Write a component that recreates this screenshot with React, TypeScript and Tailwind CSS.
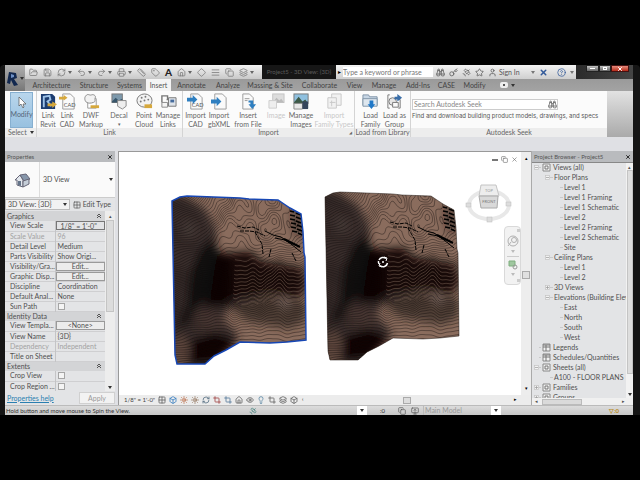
import React from 'react';
import {
  Binoculars, Key, Satellite, Star, User, CircleHelp, FolderOpen, Save, RefreshCw, Undo2, Redo2,
  Printer, Ruler, Tag, House, Diamond, AlignJustify, Copy, MonitorUp, X, Box, Sun, Crop, Eye, Lightbulb, Layers, Grid2X2,
} from 'lucide-react';

type IconType = React.ComponentType<{ size?: number; strokeWidth?: number; className?: string }>;

const Caret = ({ className = 'text-[#333]' }: { className?: string }) => (
  <svg width="4" height="3" viewBox="0 0 4 3" className={`shrink-0 ${className}`}><path d="M0 0h4L2 3z" fill="currentColor" /></svg>
);

/* ---------- title bar ---------- */

const quickTools: { icon: IconType; label: string; caret?: boolean }[] = [
  { icon: FolderOpen, label: 'Open' },
  { icon: Save, label: 'Save' },
  { icon: RefreshCw, label: 'Synchronize', caret: true },
  { icon: Undo2, label: 'Undo', caret: true },
  { icon: Redo2, label: 'Redo', caret: true },
  { icon: Printer, label: 'Measure', caret: true },
  { icon: Ruler, label: 'Aligned Dimension' },
  { icon: Tag, label: 'Tag' },
];
const viewTools: { icon: IconType; label: string; caret?: boolean }[] = [
  { icon: House, label: '3D', caret: true },
  { icon: Diamond, label: 'Section' },
  { icon: AlignJustify, label: 'Thin Lines' },
  { icon: Copy, label: 'Close Hidden' },
  { icon: Layers, label: 'Switch', caret: true },
];

function ToolButton({ icon: Icon, label, caret }: { icon: IconType; label: string; caret?: boolean }) {
  return (
    <button aria-label={label} className="flex items-center gap-[2px] text-[#777]">
      <Icon size={9} strokeWidth={2} />
      {caret && <Caret className="text-[#666]" />}
    </button>
  );
}

function TitleBar() {
  return (
    <div className="flex h-[14px] items-stretch bg-[#161616]">
      <div className="flex w-[237px] shrink-0 items-center gap-[5px] bg-linear-to-b from-[#f2f2f2] to-[#c9c9c9] pl-1">
        {quickTools.map((t) => <ToolButton key={t.label} {...t} />)}
        <button className="text-[10px] leading-none font-black text-[#222]">A</button>
        {viewTools.map((t) => <ToolButton key={t.label} {...t} />)}
      </div>
      <div className="min-w-0 flex-1 overflow-hidden text-center text-[6px] leading-[14px] whitespace-nowrap text-[#5a5a5a]">Project5 - 3D View: {'{3D}'}</div>
      <div className="flex w-[240px] shrink-0 items-center bg-linear-to-b from-[#f2f2f2] to-[#cfcfcf]">
        <span className="px-[2px] text-[6px] leading-none">▸</span>
        <input aria-label="Search help" placeholder="Type a keyword or phrase" className="h-[10px] w-[90px] bg-white text-[7px] leading-[10px] text-[#555] outline-none placeholder:text-[#777]" />
        <div className="flex items-center gap-1 pl-[3px] text-[#555]">
          <Binoculars size={9} /><Key size={9} /><Satellite size={9} /><Star size={9} /><User size={9} />
          <button className="-ml-[2px] text-[7px] leading-none whitespace-nowrap">Sign In</button>
        </div>
        <div className="ml-auto flex items-center gap-1 pr-[2px] text-[#335a9a]">
          <Caret className="text-[#777]" /><X size={9} strokeWidth={4} /><span className="w-px" /><CircleHelp size={9} /><Caret className="text-[#777]" />
        </div>
      </div>
      <div className="flex w-[57px] shrink-0 items-start justify-end bg-linear-to-r from-[#2b2b2b] to-[#454545] pr-1">
        <button aria-label="Minimize" className="flex h-[7px] w-[13px] items-center justify-center border border-[#222] bg-linear-to-b from-[#c4c4c4] to-[#666]"><span className="h-px w-[5px] bg-white" /></button>
        <button aria-label="Restore" className="flex h-[7px] w-3 items-center justify-center border border-[#222] bg-linear-to-b from-[#c4c4c4] to-[#666]"><span className="h-[3px] w-1 border border-white" /></button>
        <button aria-label="Close" className="flex h-[7px] w-[18px] items-center justify-center border border-[#411] bg-linear-to-b from-[#e58a7c] to-[#b52514] text-white"><X size={6} strokeWidth={4} /></button>
      </div>
    </div>
  );
}

const tabs: [string, string][] = [
  ['Architecture', 'w-[47px]'], ['Structure', 'w-[38px]'], ['Systems', 'w-[33px]'], ['Insert', 'w-[25px]'],
  ['Annotate', 'w-[41px]'], ['Analyze', 'w-[32px]'], ['Massing & Site', 'w-[52px]'], ['Collaborate', 'w-[47px]'],
  ['View', 'w-[23px]'], ['Manage', 'w-[36px]'], ['Add-Ins', 'w-[32px]'], ['CASE', 'w-[25px]'], ['Modify', 'w-[31px]'],
];

function TabStrip() {
  return (
    <div className="flex h-3 items-stretch bg-linear-to-b from-[#9a9a9a] to-[#a3a3a3] pl-[3px]">
      {tabs.map(([name, w]) => (
        <button key={name} className={`${w} shrink-0 text-center text-[7px] leading-3 whitespace-nowrap ${name === 'Insert' ? 'bg-[#f4f4f4] text-[#555]' : 'text-[#444]'}`}>{name}</button>
      ))}
      <button aria-label="Ribbon display" className="flex items-center gap-[3px] pl-[10px]">
        <span className="flex h-[6px] w-2 items-center justify-center rounded-xs bg-[#eee]"><span className="h-[2px] w-[2px] bg-[#555]" /></span>
        <Caret />
      </button>
    </div>
  );
}

/* ---------- ribbon ---------- */

const Sheet = () => <path d="M4 1h8l4 4v12H4z" fill="#fafafa" stroke="#9a9a9a" />;
const ArrowRight = () => <path d="M0 5h6V2l5 5-5 5V9H0z" fill="#2f7fc0" />;
const CadText = () => <text x="5" y="15" fontSize="6" fill="#555">CAD</text>;

const ribbonArt: Record<string, React.ReactNode> = {
  revit: <><path d="M1 1h12l3 3v13H1z" fill="#1c3c70" /><path d="M4 15V4l6-1 1 4-3 2 4 5" fill="none" stroke="#9ec3e8" strokeWidth="2" /><path d="M8 11h5v-2l5 3-5 4v-2H8z" fill="#d6a83c" /></>,
  cad: <><Sheet /><path d="M0 4h5V2l4 3-4 3V7H0z" fill="#d6a83c" /><CadText /></>,
  dwf: <><path d="M5 6h9v10H5z" fill="#fff" stroke="#999" /><path d="M3 3c2-3 4 0 6-1s5 1 4 3 1 4-2 5-5 1-7 0-3-5-1-7z" fill="#f2f2f2" stroke="#888" /><path d="M8 13h9v3H8z" fill="#d6a83c" /></>,
  decal: <><rect x="1" y="1" width="11" height="9" fill="#7d99ac" stroke="#777" /><path d="M1 9l4-4 3 3 4-2v4H1z" fill="#38566b" /><path d="M7 8h9v6l-4 3-5-3z" fill="#eee" stroke="#888" /></>,
  cloud: <><ellipse cx="9" cy="8" rx="8" ry="7" fill="#f2f2f2" stroke="#777" /><g fill="#777"><circle cx="6" cy="5" r="1" /><circle cx="10" cy="4" r="1" /><circle cx="13" cy="7" r="1" /><circle cx="5" cy="9" r="1" /><circle cx="9" cy="8" r="1" /></g><path d="M9 12h8v4H9z" fill="#d6a83c" /></>,
  links: <><path d="M2 10V3h6v4M7 7h5" fill="none" stroke="#777" strokeWidth="1.5" /><path d="M9 5h8v9H9z" fill="#dfe4ea" stroke="#777" /><path d="M11 7h4v3h-4z" fill="#466c9d" /><path d="M2 10h6v5H2z" fill="#f5f5f5" stroke="#888" /></>,
  importcad: <><Sheet /><ArrowRight /><CadText /></>,
  importxml: <><Sheet /><g transform="translate(0 2)"><ArrowRight /></g></>,
  insert: <><path d="M3 1h7l4 4v12H3z" fill="#fafafa" stroke="#9a9a9a" /><path d="M5 6h5M5 8h3" stroke="#999" /><path d="M9 8h5v4h3l-4 5-4-5h2v-2H9z" fill="#2f7fc0" /></>,
  image: <><rect x="5" y="1" width="12" height="9" fill="#ddd" stroke="#c4c4c4" /><path d="M5 10l4-5 3 3 2-2 3 4z" fill="#bbb" /><path d="M1 8h8v8H1z" fill="#eee" stroke="#ccc" /></>,
  images: <><rect x="1" y="1" width="15" height="10" fill="#8fc0df" stroke="#777" /><path d="M1 10l5-6 4 5 3-2 3 4v5H1z" fill="#3c5947" /><path d="M1 11h9v6H1z" fill="#e8e8e8" stroke="#888" /><path d="M10 9h6v8h-6z" fill="#35455c" /></>,
  family: <g fill="#f1f1f1" stroke="#c8c8c8"><path d="M6 1h10v12H6z" /><path d="M2 5h9v11H2z" /><path d="M6 8v6M4 10h6" /></g>,
  load: <><path d="M1 2h6l1 2h8v9H1z" fill="#c7d6e5" stroke="#8094a8" /><path d="M1 6h15v8H1z" fill="#dde6ee" stroke="#8094a8" /><path d="M8 8h4v4h2l-4 5-4-5h2z" fill="#1f78c8" /></>,
  group: <><path d="M4 2H2v14h2M13 7h2v9h-2" fill="none" stroke="#777" /><circle cx="7" cy="9" r="4" fill="#e6e6e6" stroke="#777" /><path d="M7 10h6v5H7z" fill="#fafafa" stroke="#777" /><path d="M9 4h3V1l5 4-5 4V7H9z" fill="#3a6ea8" /></>,
};

type Cmd = { art: string; a: string; b: string; w: string; off?: boolean };
const linkCmds: Cmd[] = [
  { art: 'revit', a: 'Link', b: 'Revit', w: 'w-[19px]' },
  { art: 'cad', a: 'Link', b: 'CAD', w: 'w-[19px]' },
  { art: 'dwf', a: 'DWF', b: 'Markup', w: 'w-[29px]' },
  { art: 'decal', a: 'Decal', b: '▾', w: 'w-[27px]' },
  { art: 'cloud', a: 'Point', b: 'Cloud', w: 'w-[23px]' },
  { art: 'links', a: 'Manage', b: 'Links', w: 'w-[25px]' },
];
const importCmds: Cmd[] = [
  { art: 'importcad', a: 'Import', b: 'CAD', w: 'w-[23px]' },
  { art: 'importxml', a: 'Import', b: 'gbXML', w: 'w-[24px]' },
  { art: 'insert', a: 'Insert', b: 'from File', w: 'w-[34px]' },
  { art: 'image', a: 'Image', b: '', w: 'w-[22px]', off: true },
  { art: 'images', a: 'Manage', b: 'Images', w: 'w-[28px]' },
  { art: 'family', a: 'Import', b: 'Family Types', w: 'w-[38px]', off: true },
];
const loadCmds: Cmd[] = [
  { art: 'load', a: 'Load', b: 'Family', w: 'w-[24px]' },
  { art: 'group', a: 'Load as', b: 'Group', w: 'w-[24px]' },
];

function Command({ art, a, b, w, off }: Cmd) {
  return (
    <button disabled={off} className={`${w} flex shrink-0 flex-col items-center pt-[2px] text-[7px] leading-[9px] whitespace-nowrap ${off ? 'text-[#c8c8c8]' : 'text-[#666]'}`}>
      <svg width="17" height="17" viewBox="0 0 18 18" className="mb-px shrink-0">{ribbonArt[art]}</svg>
      <span>{a}</span>
      <span className={b === '▾' ? 'text-[5px]' : ''}>{b}</span>
    </button>
  );
}

function Group({ title, cmds, className, corner }: { title: string; cmds: Cmd[]; className: string; corner?: boolean }) {
  return (
    <section className={`flex shrink-0 flex-col border-r border-[#d4d4d4] ${className}`}>
      <div className="flex h-[37px] justify-center">{cmds.map((c) => <Command key={c.art} {...c} />)}</div>
      <h2 className="relative h-[9px] bg-[#ededed] text-center text-[7px] leading-[9px] text-[#666]">
        {title}
        {corner && <span className="absolute right-[2px] text-[4px]">◢</span>}
      </h2>
    </section>
  );
}

function Ribbon() {
  return (
    <div className="flex h-[46px] overflow-hidden bg-[#fbfbfb]">
      <section className="w-8 shrink-0 border-r border-[#d4d4d4]">
        <div className="h-[37px] pt-px pl-[5px]">
          <button className="flex h-9 w-[23px] flex-col items-center border border-[#86afd0] bg-linear-to-b from-[#b9d6ec] to-[#98c1e0] pt-1 text-[7px] leading-[9px] text-[#567]">
            <svg width="8" height="12" viewBox="0 0 8 12" className="mb-px"><path d="M1 0v9l2-2 2 4 1-1-1-3h3z" fill="#fff" stroke="#555" strokeWidth="0.7" /></svg>
            Modify
          </button>
        </div>
        <h2 className="flex h-[9px] items-center gap-[3px] bg-[#ededed] pl-[3px] text-[7px] leading-[9px] text-[#666]">Select <Caret /></h2>
      </section>
      <Group title="Link" cmds={linkCmds} className="w-[146px]" />
      <Group title="Import" cmds={importCmds} className="w-[172px]" corner />
      <Group title="Load from Library" cmds={loadCmds} className="w-[56px]" />
      <section className="flex min-w-0 flex-1 flex-col overflow-hidden">
        <div className="h-[37px] pt-2 pl-[1px]">
          <div className="flex h-[11px] w-[146px] items-center justify-between border border-[#ccc] bg-white">
            <input aria-label="Search Autodesk Seek" placeholder="Search Autodesk Seek" className="h-[9px] w-[120px] pl-px text-[7px] leading-[9px] outline-none placeholder:text-[#888]" />
            <Binoculars size={9} className="text-[#555]" />
          </div>
          <p className="pt-px font-[Inter,sans-serif] text-[6px] leading-[9px] whitespace-nowrap text-[#555]">Find and download building product models, drawings, and specs</p>
        </div>
        <h2 className="h-[9px] bg-[#ededed] text-center text-[7px] leading-[9px] text-[#666]">Autodesk Seek</h2>
      </section>
      <div className="w-[26px] shrink-0 bg-linear-to-b from-[#e2e2e2] to-[#aaaaaa]" />
    </div>
  );
}

/* ---------- properties ---------- */

type Row = { kind: 'head' | 'text' | 'button' | 'check' | 'box'; name: string; value?: string; dim?: boolean };
const rows: Row[] = [
  { kind: 'head', name: 'Graphics' },
  { kind: 'box', name: 'View Scale', value: '1/8" = 1\'-0"' },
  { kind: 'text', name: 'Scale Value', value: '96', dim: true },
  { kind: 'text', name: 'Detail Level', value: 'Medium' },
  { kind: 'text', name: 'Parts Visibility', value: 'Show Origi...' },
  { kind: 'button', name: 'Visibility/Gra...', value: 'Edit...' },
  { kind: 'button', name: 'Graphic Disp...', value: 'Edit...' },
  { kind: 'text', name: 'Discipline', value: 'Coordination' },
  { kind: 'text', name: 'Default Anal...', value: 'None' },
  { kind: 'check', name: 'Sun Path' },
  { kind: 'head', name: 'Identity Data' },
  { kind: 'button', name: 'View Templa...', value: '<None>' },
  { kind: 'text', name: 'View Name', value: '{3D}' },
  { kind: 'text', name: 'Dependency', value: 'Independent', dim: true },
  { kind: 'text', name: 'Title on Sheet', value: '' },
  { kind: 'head', name: 'Extents' },
  { kind: 'check', name: 'Crop View' },
  { kind: 'check', name: 'Crop Region ...' },
];

function PropertyRow({ row }: { row: Row }) {
  if (row.kind === 'head') {
    return (
      <tr className="h-[10px] bg-[#d3d4d6]">
        <th colSpan={2} className="pl-[2px] text-left font-normal">
          <div className="flex items-center justify-between pr-1">
            <span>{row.name}</span>
            <svg width="4" height="6" viewBox="0 0 4 6" fill="none" stroke="#555"><path d="M0 3l2-2 2 2M0 5l2-2 2 2" /></svg>
          </div>
        </th>
      </tr>
    );
  }
  const id = row.name.replace(/\W/g, '');
  return (
    <tr className={`h-[10px] border-b border-[#cfcfd1] ${row.dim ? 'text-[#a2a2a2]' : ''}`}>
      <td className="overflow-hidden border-r border-[#c4c4c6] p-0 pl-[5px] whitespace-nowrap"><label htmlFor={id}>{row.name}</label></td>
      <td className="overflow-hidden p-0 whitespace-nowrap">
        {row.kind === 'button' && <button id={id} className="block h-[9px] w-full border border-[#9a9a9a] bg-[#ececec] text-center leading-[7px]">{row.value}</button>}
        {row.kind === 'check' && <input id={id} type="checkbox" className="ml-[2px] block size-[7px] appearance-none border border-[#a5a5a5] bg-[#f4f4f4]" />}
        {row.kind === 'box' && <input id={id} readOnly value={row.value} className="block h-[9px] w-full border border-[#777] pl-1 leading-[7px] outline-none" />}
        {row.kind === 'text' && <span id={id} className="pl-[2px]">{row.value}</span>}
      </td>
    </tr>
  );
}

function DockTitle({ children }: { children: React.ReactNode }) {
  return (
    <div className="flex h-[11px] shrink-0 items-center justify-between bg-[#b9bbbe] px-[2px] text-[6px] leading-[11px] text-[#555]">
      <span>{children}</span>
      <button aria-label="Close panel" className="text-black"><X size={6} strokeWidth={3} /></button>
    </div>
  );
}

function Properties() {
  return (
    <aside className="flex w-[110px] shrink-0 flex-col bg-[#e3e4e6] text-[7px] leading-[9px] text-[#505050]">
      <DockTitle>Properties</DockTitle>
      <div className="flex h-9 items-center border-b border-[#ccc] bg-[#fafafa] pr-[2px]">
        <div className="flex h-full w-[35px] items-center justify-center border-r border-[#ddd]">
          <svg width="16" height="16" viewBox="0 0 16 16"><path d="M1 8l5-5 3 5v7l-6-2V8z" fill="#e3e8ee" stroke="#667" /><path d="M6 3l6-1 4 5-6 2z" fill="#8797ab" stroke="#667" /><path d="M9 9l6-2v5l-6 3z" fill="#c5ced8" stroke="#667" /><path d="M4 9h3v5l-3-1z" fill="#65758a" /></svg>
        </div>
        <span className="flex-1 pl-[3px]">3D View</span>
        <Caret />
      </div>
      <div className="flex h-[13px] items-center justify-between">
        <div className="relative flex items-center">
          <select aria-label="View" className="h-[11px] w-[65px] appearance-none border border-[#bbb] bg-[#f2f2f2] pl-[2px] text-[7px] leading-[9px]"><option>3D View: {'{3D}'}</option></select>
          <span className="pointer-events-none absolute right-[3px] flex"><Caret /></span>
        </div>
        <button className="flex items-center gap-[2px] pr-1 whitespace-nowrap"><Grid2X2 size={8} />Edit Type</button>
      </div>
      <div className="flex h-[180px]">
        <div className="min-w-0 flex-1 overflow-hidden">
          <table className="w-full table-fixed border-collapse">
            <colgroup><col className="w-[50px]" /><col /></colgroup>
            <tbody>{rows.map((r) => <PropertyRow key={r.name} row={r} />)}</tbody>
          </table>
        </div>
        <div className="flex w-[10px] flex-col items-center justify-between bg-[#ededed] py-[2px]">
          <span className="text-[5px] leading-[7px]">▴</span>
          <span className="mb-auto h-[92px] w-2 border border-[#c4c4c4] bg-[#dcdcdc]" />
          <Caret />
        </div>
      </div>
      <div className="flex flex-1 items-center justify-between pl-[2px]">
        <a href="#help" className="text-[#2a7fb0] underline">Properties help</a>
        <button disabled className="h-3 w-9 border border-[#d0d0d0] bg-[#f2f2f2] text-[#999]">Apply</button>
      </div>
    </aside>
  );
}

/* ---------- terrain ---------- */

const W = 136;
const H = 170;

function height(x: number, y: number) {
  const left = 1 / (1 + Math.exp((x - 46) / 10));
  const wave = 3.5 * Math.sin(x / 9 + y / 40) + 3 * Math.sin(x / 4.4 + 1 + y / 60) + 1.2 * Math.sin(x / 2.1);
  const shape = y + wave * Math.min(1, Math.max(0.15, (y - 45) / 30)) + 0.12 * x;
  const band = 34 * Math.tanh((shape - 98) / 34);
  const top = Math.exp(-((y / 56) ** 4));
  const loops = 6 * Math.sin(x / 14 + 0.6) * Math.cos(y / 12) + 2 * Math.sin(x / 5 + y / 8) + 1.2 * Math.sin(x / 3 - y / 5);
  const low = 0.3 * Math.max(0, y - 110);
  const slope = y * 0.8 + x * 0.25 + 3 * Math.sin(y / 17 + x / 22) + Math.sin(y / 6 - x / 9);
  return (1 - left) * (band + low + top * loops) + left * (slope - 78);
}

function contours(gap: number) {
  const step = 2;
  let d = '';
  for (let y = 0; y < H; y += step) {
    for (let x = 0; x < W; x += step) {
      const c = [[x, y], [x + step, y], [x + step, y + step], [x, y + step]];
      const v = c.map(([a, b]) => height(a, b));
      const lo = Math.ceil(Math.min(...v) / gap);
      const hi = Math.floor(Math.max(...v) / gap);
      for (let k = lo; k <= hi; k++) {
        const p: string[] = [];
        for (let e = 0; e < 4; e++) {
          const f = (e + 1) % 4;
          const a = v[e] - k * gap;
          const b = v[f] - k * gap;
          if (a > 0 !== b > 0) {
            const t = a / (a - b);
            p.push(`${(c[e][0] + t * (c[f][0] - c[e][0])).toFixed(1)} ${(c[e][1] + t * (c[f][1] - c[e][1])).toFixed(1)}`);
          }
        }
        if (p.length >= 2) d += `M${p[0]}L${p[1]}`;
      }
    }
  }
  return d;
}

const fineContours = contours(1.7);
const wideContours = contours(3.4);
const outline = 'M1 6L9 2L16 1L69 3L78 4L107 5L113 9L119 13L130 19L132 37L133 58L134 62L135 145L116 147L99 148L69 147L55 155L43 161L34 169L6 169L4 160Z';

function Terrain({ selected }: { selected?: boolean }) {
  return (
    <>
      <g clipPath="url(#land)">
        <rect width={W} height={H} fill="#8a6c5d" />
        <g filter="url(#soft)">
          <path d="M-8 -2L14 2L34 14L44 32L46 54L58 62L58 108L52 124L68 142L40 176L-8 172Z" fill="#2e2623" opacity="0.88" />
          <path d="M44 40L30 54L20 76L16 110L6 136L18 126L32 104L46 78Z" fill="#000" opacity="0.65" />
          <path d="M44 56L60 60L60 106L34 112L30 96Z" fill="#0a0807" opacity="0.7" />
          <path d="M20 168L20 146L44 138L66 146L46 166Z" fill="#000" opacity="0.8" />
          <path d="M46 60L78 56L90 66L130 73L136 90L126 104L98 97L58 112L38 108Z" fill="#080605" opacity="0.9" />
          <path d="M54 104L100 98L134 108L134 126L118 134L76 126Z" fill="#332824" opacity="0.7" />
          <path d="M22 116L46 116L52 134L26 136Z" fill="#4a3a34" opacity="0.7" />
          <path d="M-4 150L10 140L18 152L16 172L-4 172Z" fill="#6a5145" opacity="0.8" />
        </g>
        <g filter="url(#soft)">
          <path d="M12 26L24 30L22 40L14 46Z" fill="#4a3f3a" opacity="0.7" />
          <path d="M104 102L118 100L122 112L112 116Z" fill="#85706a" opacity="0.6" />
          <path d="M120 14L132 18L132 44L122 38Z" fill="#1d1613" opacity="0.5" />
        </g>
        <path d={fineContours} fill="none" stroke="#0c0807" strokeWidth="0.5" opacity="0.75" />
        <g clipPath="url(#band)"><path d={wideContours} fill="none" stroke="#7d6557" strokeWidth="0.6" opacity="0.85" /></g>
        <g fill="none" stroke="#000">
          <path d="M66 31l8 2 8 -1 6 3M69 36l9 0 8 1 8 4M84 37l4 7 3 5 1 10M100 54l-2 8M121 58l4 8" strokeWidth="1" strokeDasharray="4 1" />
          <path d="M94 36l8 4 8 2 6 4M104 43l10 2 6 4 10 8" strokeWidth="1" />
          <path d="M113 44l8 4 8 4" strokeWidth="2" />
          <path d="M119 16l4 1M119 20l5 1M119 24l5 1M120 28l5 1M120 32l5 1M121 36l5 1M125 18l5 2M125 22l5 2M125 26l5 2M126 30l5 2M126 34l5 2M127 38l4 2" strokeWidth="1.500" />
        </g>
      </g>
      <path d={outline} fill="none" stroke={selected ? '#1747b4' : '#1c1411'} strokeWidth={selected ? 1.5 : 0.5} />
    </>
  );
}

function Scene() {
  return (
    <svg viewBox="0 0 400 245" preserveAspectRatio="xMinYMin meet" className="block h-[245px] w-full" role="img" aria-label="3D view">
      <defs>
        <clipPath id="land"><path d={outline} /></clipPath>
        <clipPath id="band"><path d="M64 62L78 60L92 68L134 76L134 104L120 110L98 106L76 112L62 106Z" /></clipPath>
        <filter id="soft"><feGaussianBlur stdDeviation="4" /></filter>
      </defs>
      <g transform="translate(52 43)"><Terrain selected /></g>
      <g transform="translate(205 39)"><Terrain /></g>
      <g transform="translate(264 110)" fill="none" stroke="#fff" strokeWidth="1.500">
        <path d="M-4 -2A4.500 4.500 0 0 1 3 -3.500M4.500 1A4.500 4.500 0 0 1 -3 3.500M-4.500 -1A4.500 4.500 0 0 0 -4 2" />
        <circle r="1" fill="#fff" stroke="none" />
        <path d="M1 -5l3 1 -1 3M-1 5l-3 -1 1 -3" strokeWidth="1" />
      </g>
    </svg>
  );
}

function ViewCube() {
  return (
    <svg width="48" height="40" viewBox="0 0 48 40" className="absolute top-[32px] right-[8px]">
      <ellipse cx="24" cy="21" rx="20" ry="14" fill="none" stroke="#e8e8e8" strokeWidth="4" />
      <path d="M16 1h15l3 11H14z" fill="#ededed" stroke="#c4c4c4" />
      <path d="M14 12h19l-1 12H16z" fill="#d9d9d9" stroke="#aaa" />
      <text x="24" y="8" fontSize="4" textAnchor="middle" fill="#999">TOP</text>
      <text x="24" y="19" fontSize="4" textAnchor="middle" fill="#777">FRONT</text>
      <g fill="#ddd" stroke="#bbb" strokeWidth="0.5"><rect x="1" y="19" width="5" height="4" /><rect x="41" y="18" width="5" height="4" /><rect x="22" y="33" width="5" height="5" /></g>
    </svg>
  );
}

function NavBar() {
  return (
    <div className="absolute top-[74px] right-0 flex h-[59px] w-[17px] flex-col items-center justify-between rounded-sm border border-[#d9d9d9] bg-[#f2f2f2] py-[2px]">
      <span className="size-[3px] self-end bg-[#ccc]" />
      <svg width="12" height="12" viewBox="0 0 12 12" fill="none" stroke="#b0b0b0"><circle cx="6" cy="6" r="5" /><circle cx="7" cy="5" r="2.500" /><path d="M1 11l3-4" /></svg>
      <Caret className="text-[#bbb]" />
      <span className="h-px w-3 bg-[#ccc]" />
      <svg width="10" height="10" viewBox="0 0 10 10"><path d="M1 1h6v5H1z" fill="#9fc79f" stroke="#7fae7f" /><circle cx="7" cy="7" r="2" fill="none" stroke="#999" /></svg>
      <Caret className="text-[#bbb]" />
      <span className="size-[3px] self-end bg-[#ccc]" />
    </div>
  );
}

const viewControls: { icon: IconType; label: string; tone: string }[] = [
  { icon: Grid2X2, label: 'Detail level', tone: 'text-[#666]' },
  { icon: Box, label: 'Visual style', tone: 'text-[#3b7fc0]' },
  { icon: Sun, label: 'Sun path', tone: 'text-[#b8653f]' },
  { icon: Sun, label: 'Shadows', tone: 'text-[#8a6a50]' },
  { icon: RefreshCw, label: 'Rendering', tone: 'text-[#5a7286]' },
  { icon: Crop, label: 'Crop view', tone: 'text-[#a04545]' },
  { icon: Crop, label: 'Crop region', tone: 'text-[#54789a]' },
  { icon: House, label: 'Lock 3D view', tone: 'text-[#666]' },
  { icon: Eye, label: 'Isolate', tone: 'text-[#666]' },
  { icon: Lightbulb, label: 'Reveal hidden', tone: 'text-[#5b88a5]' },
  { icon: Crop, label: 'Worksharing', tone: 'text-[#666]' },
  { icon: Layers, label: 'Analytical model', tone: 'text-[#666]' },
  { icon: Box, label: 'Displacement', tone: 'text-[#666]' },
];

function Canvas() {
  return (
    <main className="flex min-w-0 flex-1 flex-col border-t border-l border-[#999] bg-white">
      <div className="flex min-h-0 flex-1">
        <div className="relative min-w-0 flex-1 overflow-hidden">
          <Scene />
          <div className="absolute top-1 right-[3px] flex items-center gap-[3px] text-[#666]">
            <span className="h-[2px] w-[6px] bg-[#777]" /><Copy size={7} /><X size={7} />
          </div>
          <ViewCube />
          <NavBar />
        </div>
        <div className="flex w-[10px] flex-col items-center bg-[#ededed] py-1 text-[5px] leading-[5px]">
          <span>▴</span>
          <span className="mt-[110px] h-2 w-2 border border-[#aaa] bg-[#e0e0e0]" />
          <span className="mt-auto">▾</span>
        </div>
      </div>
      <div className="flex h-[10px] items-center bg-[#ececec] pr-[14px] pl-[5px]">
        <span className="w-[34px] text-[6px] leading-[10px] whitespace-nowrap text-[#444]">1/8" = 1'-0"</span>
        <div className="flex gap-[3px]">
          {viewControls.map(({ icon: Icon, label, tone }) => <button key={label} aria-label={label} className={tone}><Icon size={8} strokeWidth={2.5} /></button>)}
        </div>
        <span className="pl-1 text-[5px]">‹</span>
        <span className="ml-auto mr-[103px] h-[7px] w-2 border border-[#aaa] bg-[#ddd]" />
        <span className="text-[5px]">▸</span>
      </div>
    </main>
  );
}

/* ---------- project browser ---------- */

type Node = { depth: 0 | 1 | 2; name: string; open?: boolean; box?: boolean; icon?: boolean };
const tree: Node[] = [
  { depth: 0, name: 'Views (all)', box: true, open: true, icon: true },
  { depth: 1, name: 'Floor Plans', box: true, open: true },
  { depth: 2, name: 'Level 1' }, { depth: 2, name: 'Level 1 Framing' }, { depth: 2, name: 'Level 1 Schematic' },
  { depth: 2, name: 'Level 2' }, { depth: 2, name: 'Level 2 Framing' }, { depth: 2, name: 'Level 2 Schematic' },
  { depth: 2, name: 'Site' },
  { depth: 1, name: 'Ceiling Plans', box: true, open: true },
  { depth: 2, name: 'Level 1' }, { depth: 2, name: 'Level 2' },
  { depth: 1, name: '3D Views', box: true },
  { depth: 1, name: 'Elevations (Building Elev', box: true, open: true },
  { depth: 2, name: 'East' }, { depth: 2, name: 'North' }, { depth: 2, name: 'South' }, { depth: 2, name: 'West' },
  { depth: 0, name: 'Legends', icon: true },
  { depth: 0, name: 'Schedules/Quantities', icon: true },
  { depth: 0, name: 'Sheets (all)', box: true, open: true, icon: true },
  { depth: 1, name: 'A100 - FLOOR PLANS' },
  { depth: 0, name: 'Families', box: true, icon: true },
  { depth: 0, name: 'Groups', box: true, icon: true },
];
const indent = { 0: 'pl-[2px]', 1: 'pl-[13px]', 2: 'pl-[23px]' };

function TreeRow({ node }: { node: Node }) {
  return (
    <li className={`flex h-[10px] shrink-0 items-center whitespace-nowrap ${indent[node.depth]}`}>
      <span className="flex w-[5px] shrink-0 justify-center">
        {node.box && (
          <button aria-label={`Toggle ${node.name}`} className="block text-[#999]">
            <svg width="5" height="5" viewBox="0 0 5 5" fill="none" stroke="currentColor" strokeWidth="0.7"><rect x="0.500" y="0.500" width="4" height="4" fill="#f2f2f2" stroke="#c4c4c4" /><path d={node.open ? 'M1 2.500h3' : 'M1 2.500h3M2.500 1v3'} /></svg>
          </button>
        )}
      </span>
      <span className={`${node.icon ? 'w-[2px]' : 'w-[3px]'} mr-px h-px shrink-0 bg-[#c9c9c9]`} />
      {node.icon && (
        <svg width="9" height="9" viewBox="0 0 9 9" className="mr-[2px] shrink-0">
          <path d="M1 1h7v7H1z" fill="#f2f2f2" stroke="#888" />
          <path d={node.box ? 'M3 3h3v3H3z' : 'M1 2h7M1 4h7M4 2v6'} fill="none" stroke="#777" />
        </svg>
      )}
      <span>{node.name}</span>
    </li>
  );
}

function Browser() {
  return (
    <aside className="flex w-[102px] shrink-0 flex-col border-l border-[#aaa] bg-[#e3e4e6] text-[7px] leading-[10px] text-[#505050]">
      <DockTitle>Project Browser - Project5</DockTitle>
      <div className="flex min-h-0 flex-1 border-t border-[#888]">
        <ul className="-mt-px min-w-0 flex-1 overflow-hidden">{tree.map((n, i) => <TreeRow key={i} node={n} />)}</ul>
        <div className="flex w-[7px] flex-col items-center justify-between bg-[#f2f2f2] py-[2px]">
          <span className="text-[5px] leading-[5px]">▴</span>
          <span className="mb-auto h-[204px] w-[6px] border border-[#c4c4c4] bg-[#dedede]" />
          <Caret />
        </div>
      </div>
      <div className="flex h-[7px] items-center bg-[#f0f0f0] pr-2 pl-[3px] text-[5px] leading-[7px]">
        <span>◂</span><span className="ml-1 h-[6px] w-10 border border-[#bbb] bg-[#dadada]" /><span className="ml-auto">▸</span>
      </div>
    </aside>
  );
}

function StatusBar() {
  return (
    <footer className="flex h-[10px] shrink-0 items-center border-t border-[#bbb] bg-linear-to-b from-[#dcdcdc] to-[#c6c6c6] pl-px text-[6px] leading-[9px] text-[#333]">
      <span className="w-[243px] whitespace-nowrap">Hold button and move mouse to Spin the View.</span>
      <Satellite size={8} className="text-[#3f7f7a]" />
      <span className="ml-[100px] flex h-full w-[10px] items-center justify-center bg-white"><Caret /></span>
      <span className="ml-[11px] w-5 pl-[2px]">:0</span>
      <Copy size={8} className="text-[#555]" />
      <MonitorUp size={8} className="ml-[5px] text-[#555]" />
      <span className="ml-1 w-[68px] border-l border-[#bbb] pl-px text-[7px] whitespace-nowrap text-[#999]">Main Model</span>
      <span className="flex h-full w-[10px] items-center justify-center bg-white"><Caret /></span>
      <span className="mr-[14px] ml-auto font-bold text-[#b98a18]">▽:0</span>
    </footer>
  );
}

export default function App() {
  return (
    <div className="min-h-screen bg-black pt-[65px] font-['Lato','Liberation_Sans',sans-serif] select-none">
      <div className="flex h-[350px] flex-col overflow-hidden rounded-t-sm border-r-[7px] border-l-[5px] border-r-[#151515] border-l-[#151515] bg-[#dfe0e4]">
        <header className="shrink-0">
          <div className="flex">
            <button aria-label="Application menu" className="flex w-5 shrink-0 items-center justify-center gap-[2px] bg-linear-to-b from-[#b0b0b0] to-[#777]">
              <svg width="12" height="15" viewBox="0 0 12 15"><path d="M1 12L3 1L10 2L11 7L8 8L12 14L8 15L5 9L4 13Z" fill="#12284f" /><path d="M5 3l3 1v2l-3 1z" fill="#6d90c6" /></svg>
              <Caret />
            </button>
            <div className="min-w-0 flex-1">
              <TitleBar />
              <TabStrip />
            </div>
          </div>
          <Ribbon />
          <div className="h-[14px] bg-[#dfe0e4]" />
        </header>
        <div className="flex min-h-0 flex-1">
          <Properties />
          <div className="w-[3px] shrink-0" />
          <Canvas />
          <Browser />
        </div>
        <StatusBar />
      </div>
    </div>
  );
}
